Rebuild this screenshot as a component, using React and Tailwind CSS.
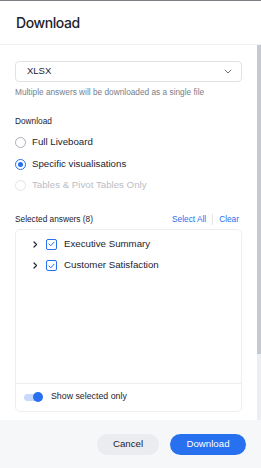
import { useState } from 'react';

const answers = [
  { id: 1, name: 'Executive Summary' },
  { id: 2, name: 'Customer Satisfaction' },
];

function Radio({ checked, disabled, label }) {
  return (
    <label className="flex items-center gap-[6px] h-[21.5px]">
      <span
        className={
          'w-[11px] h-[11px] rounded-full border flex items-center justify-center bg-white ' +
          (checked ? 'border-[#2770ef]' : disabled ? 'border-[#e3e5e9]' : 'border-[#a9afb9]')
        }
      >
        {checked && <span className="w-[5px] h-[5px] rounded-full bg-[#2770ef]" />}
      </span>
      <span className={'text-[9.7px] ' + (disabled ? 'text-[#b9bec7]' : 'text-[#1d232f]')}>{label}</span>
    </label>
  );
}

export default function App() {
  const [mode, setMode] = useState('specific');

  return (
    <div className="w-[261px] h-[468px] flex flex-col bg-white border-t border-[#7a7d82] font-['Liberation_Sans',sans-serif] overflow-hidden">
      {/* En-tête */}
      <div className="h-[44px] flex items-center px-[16px] border-b border-[#eef0f3] shrink-0">
        <h1 className="text-[14px] font-medium text-[#1d232f] font-['Inter',sans-serif] tracking-[-0.03em]">Download</h1>
      </div>

      {/* Corps + barre de défilement */}
      <div className="flex flex-1 min-h-0">
        <div className="flex-1 pl-[15px] pr-[15px] pt-[16px] flex flex-col">
          <div className="h-[21px] border border-[#dfe2e7] rounded-[4px] flex items-center justify-between pl-[11px] pr-[9px]">
            <span className="text-[9.5px] text-[#1d232f]">XLSX</span>
            <svg width="8" height="5" viewBox="0 0 8 5" fill="none">
              <path d="M1 1l3 3 3-3" stroke="#6b7280" strokeWidth="1" strokeLinecap="round" strokeLinejoin="round" />
            </svg>
          </div>
          <p className="text-[8.3px] leading-[12px] text-[#777e8b] mt-[4px]">Multiple answers will be downloaded as a single file</p>

          <p className="text-[8.3px] leading-[12px] text-[#1d232f] mt-[17px]">Download</p>
          <div className="flex flex-col mt-[5px]" onClick={() => setMode(mode)}>
            <Radio label="Full Liveboard" checked={mode === 'full'} />
            <Radio label="Specific visualisations" checked={mode === 'specific'} />
            <Radio label="Tables & Pivot Tables Only" disabled />
          </div>

          <div className="flex items-center justify-between mt-[16px] h-[14px]">
            <span className="text-[8.3px] text-[#1d232f]">Selected answers (8)</span>
            <div className="flex items-center text-[8.3px] text-[#2770ef] pr-[3px]">
              <span>Select All</span>
              <span className="w-px h-[11px] bg-[#e3e5e9] mx-[6px]" />
              <span>Clear</span>
            </div>
          </div>

          <div className="mt-[2px] h-[183px] border border-[#eceef1] rounded-[5px] flex flex-col">
            <div className="flex-1 pt-[4px] pl-[17px]">
              {answers.map((a) => (
                <div key={a.id} className="flex items-center h-[21.5px]">
                  <svg width="5" height="7" viewBox="0 0 5 7" fill="none" className="mr-[8px]">
                    <path d="M1 1l2.5 2.5L1 6" stroke="#1d232f" strokeWidth="1.2" strokeLinecap="round" strokeLinejoin="round" />
                  </svg>
                  <span className="w-[11px] h-[11px] border border-[#2770ef] rounded-[2px] flex items-center justify-center bg-white mr-[7px]">
                    <svg width="7" height="6" viewBox="0 0 7 6" fill="none">
                      <path d="M1 3l1.8 1.8L6 1.2" stroke="#2770ef" strokeWidth="1" strokeLinecap="round" strokeLinejoin="round" />
                    </svg>
                  </span>
                  <span className="text-[9.7px] text-[#1d232f]">{a.name}</span>
                </div>
              ))}
            </div>
            <div className="h-[28px] border-t border-[#eceef1] flex items-center pl-[8px] gap-[8px]">
              <span className="relative w-[19px] h-[10px] flex items-center">
                <span className="w-[17px] h-[7px] rounded-full bg-[#c9d9fb]" />
                <span className="absolute right-0 w-[10px] h-[10px] rounded-full bg-[#2770ef]" />
              </span>
              <span className="text-[8.8px] text-[#1d232f]">Show selected only</span>
            </div>
          </div>
        </div>
        <div className="w-[4px] bg-[#eceef2] flex flex-col">
          <div className="h-[309px] bg-[#c4c9d2]" />
        </div>
      </div>

      {/* Pied de page */}
      <div className="h-[48px] bg-[#f6f7f9] flex items-center justify-end gap-[11px] pr-[15px] shrink-0">
        <button className="h-[21px] w-[62px] rounded-full bg-[#eaecf0] text-[9.7px] text-[#1d232f]">Cancel</button>
        <button className="h-[21px] w-[76px] rounded-full bg-[#2770ef] text-[9.7px] text-white">Download</button>
      </div>
    </div>
  );
}
